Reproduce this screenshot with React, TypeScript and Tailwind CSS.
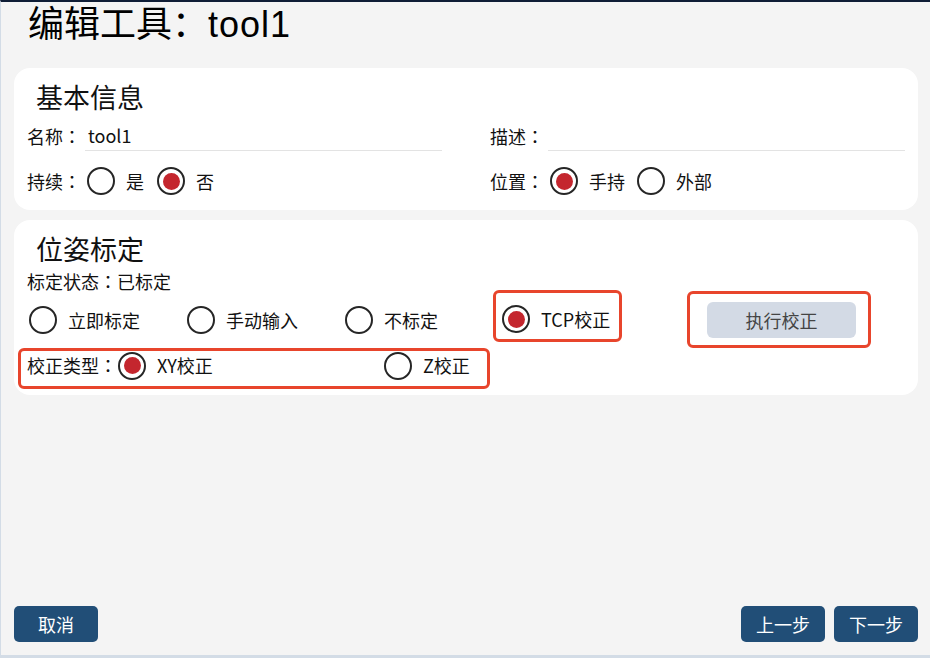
import React from "react";

const FONT = '"Noto Sans CJK SC", "Noto Sans", sans-serif';

// 全角冒号居中显示
function Colon() {
  return <span style={{ fontFamily: '"Noto Sans CJK TC", sans-serif' }}>：</span>;
}

function Radio({ checked }: { checked?: boolean }) {
  return (
    <span className="w-[28px] h-[28px] shrink-0 rounded-full border-[2.5px] border-[#262626] bg-white flex items-center justify-center">
      {checked && <span className="w-[17px] h-[17px] rounded-full bg-[#c4262e]" />}
    </span>
  );
}

function Option({ label, checked, className = "" }: { label: string; checked?: boolean; className?: string }) {
  return (
    <div className={`flex items-center gap-[11px] ${className}`}>
      <Radio checked={checked} />
      <span className="whitespace-nowrap">{label}</span>
    </div>
  );
}

export default function App() {
  return (
    <div
      className="w-[930px] h-[658px] flex flex-col bg-[#f4f4f4] text-[#111] text-[18px] border-t-2 border-t-[#0f1d36] border-l border-l-[#d3dce6] border-b-[3px] border-b-[#d3dce6] pl-[13px] pr-[12px]"
      style={{ fontFamily: FONT }}
    >
      {/* 标题 */}
      <h1
        className="pl-[14px] text-[36px] leading-[46px] text-black"
        style={{ fontFamily: '"Liberation Sans", "Noto Sans CJK SC", sans-serif' }}
      >
        编辑工具：<span className="tracking-[1px]">tool1</span>
      </h1>

      {/* 基本信息 */}
      <section className="mt-[20px] bg-white rounded-[16px] px-[13px] pt-[14px] pb-[15px]">
        <h2 className="pl-[9px] text-[27px] leading-[30px]">基本信息</h2>
        <div className="mt-[8px] grid grid-cols-2 gap-x-[48px]">
          <div className="flex items-end">
            <span className="w-[58px] leading-[30px] whitespace-nowrap">名称<Colon /></span>
            <div className="flex-1 h-[31px] border-b border-[#e3e3e3] pl-[3px] leading-[30px]">tool1</div>
          </div>
          <div className="flex items-end">
            <span className="w-[58px] leading-[30px] whitespace-nowrap">描述<Colon /></span>
            <div className="flex-1 h-[31px] border-b border-[#e3e3e3]" />
          </div>
        </div>
        <div className="mt-[16px] grid grid-cols-2 gap-x-[48px]">
          <div className="flex items-center">
            <span className="w-[60px] whitespace-nowrap">持续<Colon /></span>
            <Option label="是" className="mr-[13px]" />
            <Option label="否" checked />
          </div>
          <div className="flex items-center">
            <span className="w-[60px] whitespace-nowrap">位置<Colon /></span>
            <Option label="手持" checked className="mr-[12px]" />
            <Option label="外部" />
          </div>
        </div>
      </section>

      {/* 位姿标定 */}
      <section className="mt-[10px] bg-white rounded-[16px] px-[13px] pt-[14px] pb-[6px]">
        <h2 className="pl-[9px] text-[27px] leading-[30px]">位姿标定</h2>
        <p className="mt-[8px] leading-[18px]">标定状态<Colon />已标定</p>

        <div className="flex items-start pl-[2px]">
          <Option label="立即标定" className="w-[158px] mt-[16px]" />
          <Option label="手动输入" className="w-[158px] mt-[16px]" />
          <Option label="不标定" className="w-[148px] mt-[16px]" />
          <div className="w-[129px] h-[52px] border-[3px] border-[#e8452c] rounded-[6px] pl-[6px] pt-[12px]">
            <Option label="TCP校正" checked />
          </div>
          <div className="ml-[65px] mt-[1px] w-[184px] h-[57px] border-[3px] border-[#e8452c] rounded-[6px] pl-[17px] pt-[8px]">
            <button className="w-[149px] h-[36px] rounded-[6px] bg-[#d3dae5] text-[#444]">执行校正</button>
          </div>
        </div>

        <div className="-ml-[9px] w-[472px] h-[41px] border-[3px] border-[#e8452c] rounded-[6px] pl-[6px] pb-[6px] flex items-center">
          <span className="w-[91px] whitespace-nowrap">校正类型<Colon /></span>
          <Option label="XY校正" checked className="w-[266px]" />
          <Option label="Z校正" />
        </div>
      </section>

      {/* 底部按钮 */}
      <footer className="mt-auto pb-[13px] flex items-center">
        <button className="w-[84px] h-[36px] rounded-[5px] bg-[#214e77] text-white">取消</button>
        <div className="ml-auto flex gap-[9px]">
          <button className="w-[84px] h-[36px] rounded-[5px] bg-[#214e77] text-white">上一步</button>
          <button className="w-[84px] h-[36px] rounded-[5px] bg-[#214e77] text-white">下一步</button>
        </div>
      </footer>
    </div>
  );
}
